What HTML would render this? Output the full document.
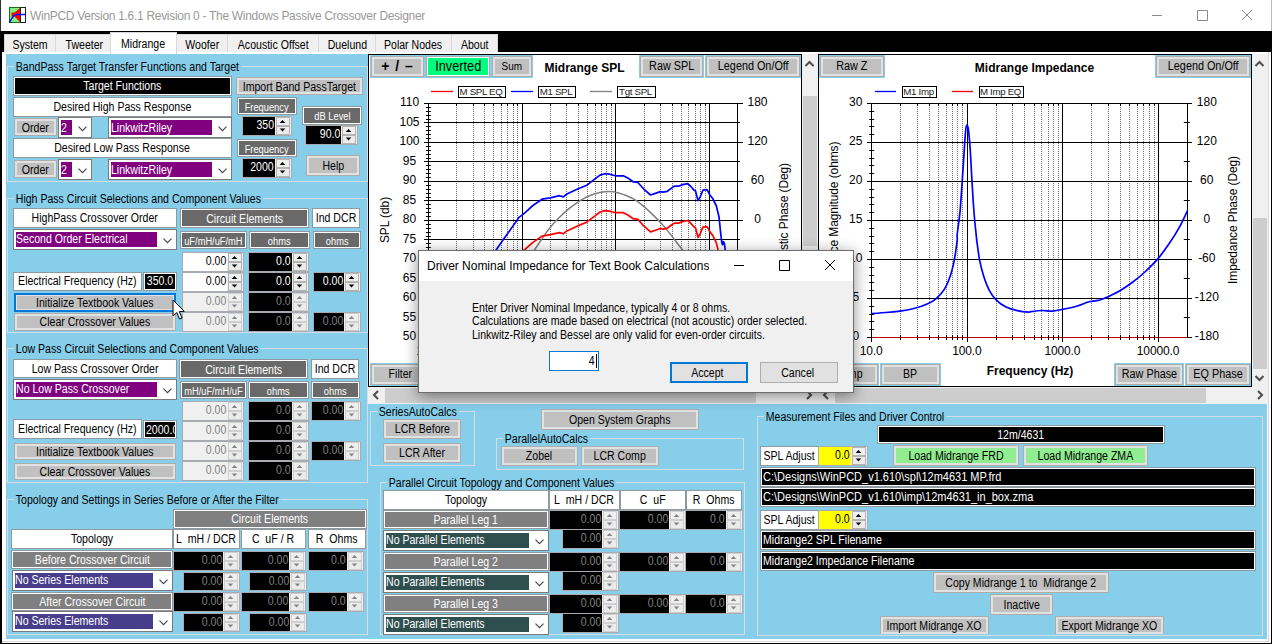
<!DOCTYPE html><html><head><meta charset="utf-8"><title>WinPCD</title><style>
*{box-sizing:border-box;margin:0;padding:0}
html,body{width:1272px;height:644px;overflow:hidden;background:#000}
body{position:relative;font-family:"Liberation Sans",sans-serif;font-size:12px;color:#000}
.t{display:inline-block;transform:scaleX(.88);transform-origin:50% 50%;margin:0 -40px;position:relative}
.tl{transform-origin:0 50%;margin:0}
.tr{transform-origin:100% 50%;margin:0}
.s{font-size:10px;transform:scaleX(.93)}
.a{position:absolute;white-space:nowrap;overflow:hidden}
.lb{position:absolute;white-space:nowrap;overflow:hidden;border:1px solid #8e9aa0;box-shadow:inset 0 0 0 1px #fff;text-align:center}
.bt{position:absolute;white-space:nowrap;overflow:hidden;border:1px solid #adadad;box-shadow:inset 0 0 0 2px #e1e1e1;background:#c0c0c0;text-align:center}
.cb{position:absolute;white-space:nowrap;overflow:hidden;border:1px solid #7a7a7a;background:#fff}
.cb i{position:absolute;left:2px;top:2px;bottom:2px;color:#fff;font-style:normal;padding-left:0;overflow:hidden}
.cb svg{position:absolute;right:4px;top:50%;margin-top:-2px}
.nud{position:absolute;white-space:nowrap;overflow:hidden;border:1px solid #a9abb2;background:#f0f0f0}
.nud b{position:absolute;left:0;top:0;bottom:0;font-weight:normal;text-align:right;padding-right:1px}
.nud svg{position:absolute;right:0;top:0}
.gb{position:absolute;border:1px solid #d3dde3}
.gb span{position:absolute;left:6px;top:-7px;background:#87ceeb;padding:0 2px 0 2px;line-height:14px;white-space:nowrap;transform:scaleX(.88);transform-origin:0 50%}
svg text{font-family:"Liberation Sans",sans-serif}
</style></head><body>
<div class="a" style="left:0;top:0;width:1272px;height:31px;background:#fff;border-left:1px solid #333;border-right:1px solid #bbb"></div>
<svg class="a" style="left:9px;top:7px" width="17" height="17" viewBox="0 0 17 17"><rect x="0.5" y="0.5" width="11" height="15" fill="#7cf27c" stroke="#1c6b1c"/><rect x="11.5" y="0.5" width="5" height="15" fill="#fff" stroke="#222"/><path d="M11 1 L11 15 L5.5 9.5 L2.5 9.5 L2.5 5.5 L5.5 5.5Z" fill="#f00"/><path d="M0.5 15.5 C3 11 4 7.6 8 7.5 L16 7.5" fill="none" stroke="#00f" stroke-width="1.3"/></svg>
<div class="a" style="left:30px;top:7px;height:18px;line-height:18px;font-size:12px;letter-spacing:-0.3px;color:#999">WinPCD Version 1.6.1 Revision 0 - The Windows Passive Crossover Designer</div>
<svg class="a" style="left:1150px;top:8px" width="112" height="16" viewBox="0 0 112 16"><path d="M2 7.5 H12 M47.5 2.5 H57.5 V12.5 H47.5Z M92 2 L102 12 M102 2 L92 12" fill="none" stroke="#8a8a8a" stroke-width="1"/></svg>
<div class="a" style="left:1px;top:31px;width:1270px;height:613px;background:#000"></div>
<div class="a" style="left:2px;top:52px;width:1269px;height:591px;background:#fff"></div>
<div class="a" style="left:2px;top:52px;width:1267px;height:590px;border-right:1px solid #d9d9d9;border-bottom:1px solid #d9d9d9"></div>
<div class="a" style="left:6px;top:54px;width:1261px;height:585px;background:#87ceeb"></div>
<div class="a" style="left:4px;top:34px;width:52px;height:18px;background:#f0f0f0;border:1px solid #d9d9d9;border-bottom:none;text-align:center;line-height:18px"><span class="t" style="top:0.5px;">System</span></div>
<div class="a" style="left:55px;top:34px;width:58px;height:18px;background:#f0f0f0;border:1px solid #d9d9d9;border-bottom:none;text-align:center;line-height:18px"><span class="t" style="top:0.5px;">Tweeter</span></div>
<div class="a" style="left:110px;top:32px;width:67px;height:22px;background:#fff;border:1px solid #d9d9d9;border-bottom:none;text-align:center;line-height:20px"><span class="t" style="top:0.5px;">Midrange</span></div>
<div class="a" style="left:176px;top:34px;width:52px;height:18px;background:#f0f0f0;border:1px solid #d9d9d9;border-bottom:none;text-align:center;line-height:18px"><span class="t" style="top:0.5px;">Woofer</span></div>
<div class="a" style="left:227px;top:34px;width:92px;height:18px;background:#f0f0f0;border:1px solid #d9d9d9;border-bottom:none;text-align:center;line-height:18px"><span class="t" style="top:0.5px;">Acoustic Offset</span></div>
<div class="a" style="left:318px;top:34px;width:58px;height:18px;background:#f0f0f0;border:1px solid #d9d9d9;border-bottom:none;text-align:center;line-height:18px"><span class="t" style="top:0.5px;">Duelund</span></div>
<div class="a" style="left:375px;top:34px;width:77px;height:18px;background:#f0f0f0;border:1px solid #d9d9d9;border-bottom:none;text-align:center;line-height:18px"><span class="t" style="top:0.5px;">Polar Nodes</span></div>
<div class="a" style="left:451px;top:34px;width:47px;height:18px;background:#f0f0f0;border:1px solid #d9d9d9;border-bottom:none;text-align:center;line-height:18px"><span class="t" style="top:0.5px;">About</span></div>
<div class="gb" style="left:7px;top:66px;width:361px;height:116px"><span>BandPass Target Transfer Functions and Target</span></div>
<div class="lb" style="left:13px;top:76px;width:219px;height:20px;line-height:18px;background:#000;color:#fff;"><span class="t">Target Functions</span></div>
<div class="bt" style="left:236px;top:77px;width:127px;height:18px;line-height:16px;background:#c0c0c0;"><span class="t" style="top:0.7px;">Import Band PassTarget</span></div>
<div class="lb" style="left:13px;top:97px;width:219px;height:20px;line-height:18px;background:#fff;color:#000;"><span class="t">Desired High Pass Response</span></div>
<div class="bt" style="left:14px;top:118px;width:43px;height:18px;line-height:16px;background:#c0c0c0;"><span class="t" style="top:0.5px;">Order</span></div>
<div class="cb" style="left:58px;top:117px;width:34px;height:21px;line-height:15px"><i style="background:#800080;width:11px"><span class="t tl" style="top:1px;">2</span></i><svg width="9" height="6" viewBox="0 0 9 6"><path d="M0.5 0.7 L4.5 4.7 L8.5 0.7" fill="none" stroke="#444" stroke-width="1.1"/></svg></div>
<div class="cb" style="left:108px;top:117px;width:124px;height:21px;line-height:15px"><i style="background:#800080;width:101px"><span class="t tl" style="top:1px;">LinkwitzRiley</span></i><svg width="9" height="6" viewBox="0 0 9 6"><path d="M0.5 0.7 L4.5 4.7 L8.5 0.7" fill="none" stroke="#444" stroke-width="1.1"/></svg></div>
<div class="lb" style="left:13px;top:138px;width:219px;height:20px;line-height:18px;background:#fff;color:#000;"><span class="t">Desired Low Pass Response</span></div>
<div class="bt" style="left:14px;top:160px;width:43px;height:18px;line-height:16px;background:#c0c0c0;"><span class="t" style="top:0.5px;">Order</span></div>
<div class="cb" style="left:58px;top:159px;width:34px;height:21px;line-height:15px"><i style="background:#800080;width:11px"><span class="t tl" style="top:1px;">2</span></i><svg width="9" height="6" viewBox="0 0 9 6"><path d="M0.5 0.7 L4.5 4.7 L8.5 0.7" fill="none" stroke="#444" stroke-width="1.1"/></svg></div>
<div class="cb" style="left:108px;top:159px;width:124px;height:21px;line-height:15px"><i style="background:#800080;width:101px"><span class="t tl" style="top:1px;">LinkwitzRiley</span></i><svg width="9" height="6" viewBox="0 0 9 6"><path d="M0.5 0.7 L4.5 4.7 L8.5 0.7" fill="none" stroke="#444" stroke-width="1.1"/></svg></div>
<div class="lb" style="left:237px;top:97px;width:60px;height:18px;line-height:16px;background:#696969;color:#fff;"><span class="t s" style="top:0.8px;">Frequency</span></div>
<div class="nud" style="left:242px;top:116px;width:50px;height:20px;line-height:17px"><b style="background:#000;color:#fff;width:32px"><span class="t tr" style="top:-0.5px;">350</span></b><svg width="16" height="18" viewBox="0 0 16 18"><rect x="0" y="0" width="16" height="18" fill="#f0f0f0"/><rect x="1.5" y="0.5" width="13" height="8" fill="#efefef" stroke="#b4b4b4"/><rect x="1.5" y="9.5" width="13" height="8" fill="#ebebeb" stroke="#b4b4b4"/><path d="M4.7 6 L7.5 3 L10.3 6Z M4.7 11.5 L7.5 14.5 L10.3 11.5Z" fill="#000"/></svg></div>
<div class="lb" style="left:237px;top:139px;width:60px;height:18px;line-height:16px;background:#696969;color:#fff;"><span class="t s" style="top:0.8px;">Frequency</span></div>
<div class="nud" style="left:242px;top:158px;width:50px;height:20px;line-height:17px"><b style="background:#000;color:#fff;width:32px"><span class="t tr" style="top:-0.5px;">2000</span></b><svg width="16" height="18" viewBox="0 0 16 18"><rect x="0" y="0" width="16" height="18" fill="#f0f0f0"/><rect x="1.5" y="0.5" width="13" height="8" fill="#efefef" stroke="#b4b4b4"/><rect x="1.5" y="9.5" width="13" height="8" fill="#ebebeb" stroke="#b4b4b4"/><path d="M4.7 6 L7.5 3 L10.3 6Z M4.7 11.5 L7.5 14.5 L10.3 11.5Z" fill="#000"/></svg></div>
<div class="lb" style="left:302px;top:106px;width:60px;height:19px;line-height:17px;background:#696969;color:#fff;"><span class="t s" style="top:1.3px;">dB Level</span></div>
<div class="nud" style="left:305px;top:125px;width:53px;height:20px;line-height:17px"><b style="background:#000;color:#fff;width:35px"><span class="t tr" style="top:-0.5px;">90.0</span></b><svg width="16" height="18" viewBox="0 0 16 18"><rect x="0" y="0" width="16" height="18" fill="#f0f0f0"/><rect x="1.5" y="0.5" width="13" height="8" fill="#efefef" stroke="#b4b4b4"/><rect x="1.5" y="9.5" width="13" height="8" fill="#ebebeb" stroke="#b4b4b4"/><path d="M4.7 6 L7.5 3 L10.3 6Z M4.7 11.5 L7.5 14.5 L10.3 11.5Z" fill="#000"/></svg></div>
<div class="bt" style="left:306px;top:155px;width:54px;height:21px;line-height:19px;background:#c0c0c0;"><span class="t" style="top:1px;">Help</span></div>
<div class="gb" style="left:7px;top:198px;width:361px;height:135px"><span>High Pass Circuit Selections and Component Values</span></div>
<div class="lb" style="left:13px;top:208px;width:164px;height:20px;line-height:18px;background:#fff;color:#000;"><span class="t">HighPass Crossover Order</span></div>
<div class="lb" style="left:180px;top:208px;width:129px;height:20px;line-height:18px;background:#696969;color:#fff;"><span class="t" style="top:0.5px;">Circuit Elements</span></div>
<div class="lb" style="left:312px;top:208px;width:48px;height:20px;line-height:18px;background:#fff;color:#000;"><span class="t">Ind DCR</span></div>
<div class="lb" style="left:180px;top:231px;width:67px;height:18px;line-height:16px;background:#696969;color:#fff;"><span class="t s" style="top:0.8px;">uF/mH/uF/mH</span></div>
<div class="lb" style="left:249px;top:231px;width:61px;height:18px;line-height:16px;background:#696969;color:#fff;"><span class="t s" style="top:0.8px;">ohms</span></div>
<div class="lb" style="left:313px;top:231px;width:48px;height:18px;line-height:16px;background:#696969;color:#fff;"><span class="t s" style="top:0.8px;">ohms</span></div>
<div class="cb" style="left:13px;top:229px;width:164px;height:21px;line-height:15px"><i style="background:#800080;width:141px"><span class="t tl">Second Order Electrical</span></i><svg width="9" height="6" viewBox="0 0 9 6"><path d="M0.5 0.7 L4.5 4.7 L8.5 0.7" fill="none" stroke="#444" stroke-width="1.1"/></svg></div>
<div class="nud" style="left:182px;top:252px;width:62px;height:20px;line-height:17px"><b style="background:#fff;color:#000;width:44px"><span class="t tr" style="top:-0.5px;">0.00</span></b><svg width="16" height="18" viewBox="0 0 16 18"><rect x="0" y="0" width="16" height="18" fill="#f0f0f0"/><rect x="1.5" y="0.5" width="13" height="8" fill="#efefef" stroke="#b4b4b4"/><rect x="1.5" y="9.5" width="13" height="8" fill="#ebebeb" stroke="#b4b4b4"/><path d="M4.7 6 L7.5 3 L10.3 6Z M4.7 11.5 L7.5 14.5 L10.3 11.5Z" fill="#000"/></svg></div>
<div class="nud" style="left:248px;top:252px;width:61px;height:20px;line-height:17px"><b style="background:#000;color:#fff;width:43px"><span class="t tr" style="top:-0.5px;">0.0</span></b><svg width="16" height="18" viewBox="0 0 16 18"><rect x="0" y="0" width="16" height="18" fill="#f0f0f0"/><rect x="1.5" y="0.5" width="13" height="8" fill="#efefef" stroke="#b4b4b4"/><rect x="1.5" y="9.5" width="13" height="8" fill="#ebebeb" stroke="#b4b4b4"/><path d="M4.7 6 L7.5 3 L10.3 6Z M4.7 11.5 L7.5 14.5 L10.3 11.5Z" fill="#000"/></svg></div>
<div class="nud" style="left:182px;top:272px;width:62px;height:20px;line-height:17px"><b style="background:#fff;color:#000;width:44px"><span class="t tr" style="top:-0.5px;">0.00</span></b><svg width="16" height="18" viewBox="0 0 16 18"><rect x="0" y="0" width="16" height="18" fill="#f0f0f0"/><rect x="1.5" y="0.5" width="13" height="8" fill="#efefef" stroke="#b4b4b4"/><rect x="1.5" y="9.5" width="13" height="8" fill="#ebebeb" stroke="#b4b4b4"/><path d="M4.7 6 L7.5 3 L10.3 6Z M4.7 11.5 L7.5 14.5 L10.3 11.5Z" fill="#000"/></svg></div>
<div class="nud" style="left:248px;top:272px;width:61px;height:20px;line-height:17px"><b style="background:#000;color:#fff;width:43px"><span class="t tr" style="top:-0.5px;">0.0</span></b><svg width="16" height="18" viewBox="0 0 16 18"><rect x="0" y="0" width="16" height="18" fill="#f0f0f0"/><rect x="1.5" y="0.5" width="13" height="8" fill="#efefef" stroke="#b4b4b4"/><rect x="1.5" y="9.5" width="13" height="8" fill="#ebebeb" stroke="#b4b4b4"/><path d="M4.7 6 L7.5 3 L10.3 6Z M4.7 11.5 L7.5 14.5 L10.3 11.5Z" fill="#000"/></svg></div>
<div class="nud" style="left:313px;top:272px;width:48px;height:20px;line-height:17px"><b style="background:#000;color:#fff;width:30px"><span class="t tr" style="top:-0.5px;">0.00</span></b><svg width="16" height="18" viewBox="0 0 16 18"><rect x="0" y="0" width="16" height="18" fill="#f0f0f0"/><rect x="1.5" y="0.5" width="13" height="8" fill="#efefef" stroke="#b4b4b4"/><rect x="1.5" y="9.5" width="13" height="8" fill="#ebebeb" stroke="#b4b4b4"/><path d="M4.7 6 L7.5 3 L10.3 6Z M4.7 11.5 L7.5 14.5 L10.3 11.5Z" fill="#000"/></svg></div>
<div class="nud" style="left:182px;top:292px;width:62px;height:20px;line-height:17px"><b style="background:#f0f0f0;color:#808080;width:44px"><span class="t tr" style="top:-0.5px;">0.00</span></b><svg width="16" height="18" viewBox="0 0 16 18"><rect x="0" y="0" width="16" height="18" fill="#f0f0f0"/><rect x="1.5" y="0.5" width="13" height="8" fill="#efefef" stroke="#cfcfcf"/><rect x="1.5" y="9.5" width="13" height="8" fill="#ebebeb" stroke="#cfcfcf"/><path d="M4.7 6 L7.5 3 L10.3 6Z M4.7 11.5 L7.5 14.5 L10.3 11.5Z" fill="#858585"/></svg></div>
<div class="nud" style="left:248px;top:292px;width:61px;height:20px;line-height:17px"><b style="background:#000;color:#808080;width:43px"><span class="t tr" style="top:-0.5px;">0.0</span></b><svg width="16" height="18" viewBox="0 0 16 18"><rect x="0" y="0" width="16" height="18" fill="#f0f0f0"/><rect x="1.5" y="0.5" width="13" height="8" fill="#efefef" stroke="#cfcfcf"/><rect x="1.5" y="9.5" width="13" height="8" fill="#ebebeb" stroke="#cfcfcf"/><path d="M4.7 6 L7.5 3 L10.3 6Z M4.7 11.5 L7.5 14.5 L10.3 11.5Z" fill="#858585"/></svg></div>
<div class="nud" style="left:182px;top:312px;width:62px;height:20px;line-height:17px"><b style="background:#f0f0f0;color:#808080;width:44px"><span class="t tr" style="top:-0.5px;">0.00</span></b><svg width="16" height="18" viewBox="0 0 16 18"><rect x="0" y="0" width="16" height="18" fill="#f0f0f0"/><rect x="1.5" y="0.5" width="13" height="8" fill="#efefef" stroke="#cfcfcf"/><rect x="1.5" y="9.5" width="13" height="8" fill="#ebebeb" stroke="#cfcfcf"/><path d="M4.7 6 L7.5 3 L10.3 6Z M4.7 11.5 L7.5 14.5 L10.3 11.5Z" fill="#858585"/></svg></div>
<div class="nud" style="left:248px;top:312px;width:61px;height:20px;line-height:17px"><b style="background:#000;color:#808080;width:43px"><span class="t tr" style="top:-0.5px;">0.0</span></b><svg width="16" height="18" viewBox="0 0 16 18"><rect x="0" y="0" width="16" height="18" fill="#f0f0f0"/><rect x="1.5" y="0.5" width="13" height="8" fill="#efefef" stroke="#cfcfcf"/><rect x="1.5" y="9.5" width="13" height="8" fill="#ebebeb" stroke="#cfcfcf"/><path d="M4.7 6 L7.5 3 L10.3 6Z M4.7 11.5 L7.5 14.5 L10.3 11.5Z" fill="#858585"/></svg></div>
<div class="nud" style="left:313px;top:312px;width:48px;height:20px;line-height:17px"><b style="background:#000;color:#808080;width:30px"><span class="t tr" style="top:-0.5px;">0.00</span></b><svg width="16" height="18" viewBox="0 0 16 18"><rect x="0" y="0" width="16" height="18" fill="#f0f0f0"/><rect x="1.5" y="0.5" width="13" height="8" fill="#efefef" stroke="#cfcfcf"/><rect x="1.5" y="9.5" width="13" height="8" fill="#ebebeb" stroke="#cfcfcf"/><path d="M4.7 6 L7.5 3 L10.3 6Z M4.7 11.5 L7.5 14.5 L10.3 11.5Z" fill="#858585"/></svg></div>
<div class="lb" style="left:13px;top:272px;width:129px;height:19px;line-height:17px;background:#fff;color:#000;"><span class="t" style="top:-0.3px;">Electrical Frequency (Hz)</span></div>
<div class="lb" style="left:143px;top:272px;width:34px;height:19px;line-height:17px;background:#000;color:#fff;"><span class="t" style="top:-0.3px;">350.0</span></div>
<div class="bt" style="left:14px;top:293px;width:162px;height:19px;line-height:17px;background:#c0c0c0;border:2px solid #0078d7;box-shadow:inset 0 0 0 1px #e1e1e1;line-height:15px"><span class="t" style="top:1px;">Initialize Textbook Values</span></div>
<div class="bt" style="left:14px;top:313px;width:162px;height:18px;line-height:16px;background:#c0c0c0;"><span class="t" style="top:0.3px;">Clear Crossover Values</span></div>
<div class="gb" style="left:7px;top:348px;width:361px;height:135px"><span>Low Pass Circuit Selections and Component Values</span></div>
<div class="lb" style="left:13px;top:359px;width:164px;height:19px;line-height:17px;background:#fff;color:#000;"><span class="t" style="top:0.5px;">Low Pass Crossover Order</span></div>
<div class="lb" style="left:179px;top:359px;width:129px;height:20px;line-height:18px;background:#696969;color:#fff;"><span class="t" style="top:0.5px;">Circuit Elements</span></div>
<div class="lb" style="left:311px;top:359px;width:48px;height:20px;line-height:18px;background:#fff;color:#000;"><span class="t">Ind DCR</span></div>
<div class="lb" style="left:180px;top:381px;width:67px;height:18px;line-height:16px;background:#696969;color:#fff;"><span class="t s" style="top:0.8px;">mH/uF/mH/uF</span></div>
<div class="lb" style="left:248px;top:381px;width:61px;height:18px;line-height:16px;background:#696969;color:#fff;"><span class="t s" style="top:0.8px;">ohms</span></div>
<div class="lb" style="left:311px;top:381px;width:49px;height:18px;line-height:16px;background:#696969;color:#fff;"><span class="t s" style="top:0.8px;">ohms</span></div>
<div class="cb" style="left:13px;top:379px;width:164px;height:21px;line-height:15px"><i style="background:#800080;width:141px"><span class="t tl">No Low Pass Crossover</span></i><svg width="9" height="6" viewBox="0 0 9 6"><path d="M0.5 0.7 L4.5 4.7 L8.5 0.7" fill="none" stroke="#444" stroke-width="1.1"/></svg></div>
<div class="nud" style="left:182px;top:401px;width:62px;height:20px;line-height:17px"><b style="background:#f0f0f0;color:#808080;width:44px"><span class="t tr" style="top:-0.5px;">0.00</span></b><svg width="16" height="18" viewBox="0 0 16 18"><rect x="0" y="0" width="16" height="18" fill="#f0f0f0"/><rect x="1.5" y="0.5" width="13" height="8" fill="#efefef" stroke="#cfcfcf"/><rect x="1.5" y="9.5" width="13" height="8" fill="#ebebeb" stroke="#cfcfcf"/><path d="M4.7 6 L7.5 3 L10.3 6Z M4.7 11.5 L7.5 14.5 L10.3 11.5Z" fill="#858585"/></svg></div>
<div class="nud" style="left:248px;top:401px;width:61px;height:20px;line-height:17px"><b style="background:#000;color:#808080;width:43px"><span class="t tr" style="top:-0.5px;">0.0</span></b><svg width="16" height="18" viewBox="0 0 16 18"><rect x="0" y="0" width="16" height="18" fill="#f0f0f0"/><rect x="1.5" y="0.5" width="13" height="8" fill="#efefef" stroke="#cfcfcf"/><rect x="1.5" y="9.5" width="13" height="8" fill="#ebebeb" stroke="#cfcfcf"/><path d="M4.7 6 L7.5 3 L10.3 6Z M4.7 11.5 L7.5 14.5 L10.3 11.5Z" fill="#858585"/></svg></div>
<div class="nud" style="left:311px;top:401px;width:50px;height:20px;line-height:17px"><b style="background:#000;color:#808080;width:32px"><span class="t tr" style="top:-0.5px;">0.00</span></b><svg width="16" height="18" viewBox="0 0 16 18"><rect x="0" y="0" width="16" height="18" fill="#f0f0f0"/><rect x="1.5" y="0.5" width="13" height="8" fill="#efefef" stroke="#cfcfcf"/><rect x="1.5" y="9.5" width="13" height="8" fill="#ebebeb" stroke="#cfcfcf"/><path d="M4.7 6 L7.5 3 L10.3 6Z M4.7 11.5 L7.5 14.5 L10.3 11.5Z" fill="#858585"/></svg></div>
<div class="nud" style="left:182px;top:421px;width:62px;height:20px;line-height:17px"><b style="background:#f0f0f0;color:#808080;width:44px"><span class="t tr" style="top:-0.5px;">0.00</span></b><svg width="16" height="18" viewBox="0 0 16 18"><rect x="0" y="0" width="16" height="18" fill="#f0f0f0"/><rect x="1.5" y="0.5" width="13" height="8" fill="#efefef" stroke="#cfcfcf"/><rect x="1.5" y="9.5" width="13" height="8" fill="#ebebeb" stroke="#cfcfcf"/><path d="M4.7 6 L7.5 3 L10.3 6Z M4.7 11.5 L7.5 14.5 L10.3 11.5Z" fill="#858585"/></svg></div>
<div class="nud" style="left:248px;top:421px;width:61px;height:20px;line-height:17px"><b style="background:#000;color:#808080;width:43px"><span class="t tr" style="top:-0.5px;">0.0</span></b><svg width="16" height="18" viewBox="0 0 16 18"><rect x="0" y="0" width="16" height="18" fill="#f0f0f0"/><rect x="1.5" y="0.5" width="13" height="8" fill="#efefef" stroke="#cfcfcf"/><rect x="1.5" y="9.5" width="13" height="8" fill="#ebebeb" stroke="#cfcfcf"/><path d="M4.7 6 L7.5 3 L10.3 6Z M4.7 11.5 L7.5 14.5 L10.3 11.5Z" fill="#858585"/></svg></div>
<div class="nud" style="left:182px;top:441px;width:62px;height:20px;line-height:17px"><b style="background:#f0f0f0;color:#808080;width:44px"><span class="t tr" style="top:-0.5px;">0.00</span></b><svg width="16" height="18" viewBox="0 0 16 18"><rect x="0" y="0" width="16" height="18" fill="#f0f0f0"/><rect x="1.5" y="0.5" width="13" height="8" fill="#efefef" stroke="#cfcfcf"/><rect x="1.5" y="9.5" width="13" height="8" fill="#ebebeb" stroke="#cfcfcf"/><path d="M4.7 6 L7.5 3 L10.3 6Z M4.7 11.5 L7.5 14.5 L10.3 11.5Z" fill="#858585"/></svg></div>
<div class="nud" style="left:248px;top:441px;width:61px;height:20px;line-height:17px"><b style="background:#000;color:#808080;width:43px"><span class="t tr" style="top:-0.5px;">0.0</span></b><svg width="16" height="18" viewBox="0 0 16 18"><rect x="0" y="0" width="16" height="18" fill="#f0f0f0"/><rect x="1.5" y="0.5" width="13" height="8" fill="#efefef" stroke="#cfcfcf"/><rect x="1.5" y="9.5" width="13" height="8" fill="#ebebeb" stroke="#cfcfcf"/><path d="M4.7 6 L7.5 3 L10.3 6Z M4.7 11.5 L7.5 14.5 L10.3 11.5Z" fill="#858585"/></svg></div>
<div class="nud" style="left:311px;top:441px;width:50px;height:20px;line-height:17px"><b style="background:#000;color:#808080;width:32px"><span class="t tr" style="top:-0.5px;">0.00</span></b><svg width="16" height="18" viewBox="0 0 16 18"><rect x="0" y="0" width="16" height="18" fill="#f0f0f0"/><rect x="1.5" y="0.5" width="13" height="8" fill="#efefef" stroke="#cfcfcf"/><rect x="1.5" y="9.5" width="13" height="8" fill="#ebebeb" stroke="#cfcfcf"/><path d="M4.7 6 L7.5 3 L10.3 6Z M4.7 11.5 L7.5 14.5 L10.3 11.5Z" fill="#858585"/></svg></div>
<div class="nud" style="left:182px;top:461px;width:62px;height:20px;line-height:17px"><b style="background:#f0f0f0;color:#808080;width:44px"><span class="t tr" style="top:-0.5px;">0.00</span></b><svg width="16" height="18" viewBox="0 0 16 18"><rect x="0" y="0" width="16" height="18" fill="#f0f0f0"/><rect x="1.5" y="0.5" width="13" height="8" fill="#efefef" stroke="#cfcfcf"/><rect x="1.5" y="9.5" width="13" height="8" fill="#ebebeb" stroke="#cfcfcf"/><path d="M4.7 6 L7.5 3 L10.3 6Z M4.7 11.5 L7.5 14.5 L10.3 11.5Z" fill="#858585"/></svg></div>
<div class="nud" style="left:248px;top:461px;width:61px;height:20px;line-height:17px"><b style="background:#000;color:#808080;width:43px"><span class="t tr" style="top:-0.5px;">0.0</span></b><svg width="16" height="18" viewBox="0 0 16 18"><rect x="0" y="0" width="16" height="18" fill="#f0f0f0"/><rect x="1.5" y="0.5" width="13" height="8" fill="#efefef" stroke="#cfcfcf"/><rect x="1.5" y="9.5" width="13" height="8" fill="#ebebeb" stroke="#cfcfcf"/><path d="M4.7 6 L7.5 3 L10.3 6Z M4.7 11.5 L7.5 14.5 L10.3 11.5Z" fill="#858585"/></svg></div>
<div class="lb" style="left:13px;top:419px;width:129px;height:20px;line-height:18px;background:#fff;color:#000;"><span class="t">Electrical Frequency (Hz)</span></div>
<div class="lb" style="left:143px;top:420px;width:34px;height:19px;line-height:17px;background:#000;color:#fff;text-align:left;padding-left:2px"><span class="t tl" style="top:0.5px;">2000.0</span></div>
<div class="bt" style="left:14px;top:443px;width:162px;height:17px;line-height:15px;background:#c0c0c0;"><span class="t" style="top:1px;">Initialize Textbook Values</span></div>
<div class="bt" style="left:14px;top:463px;width:162px;height:17px;line-height:15px;background:#c0c0c0;"><span class="t" style="top:1px;">Clear Crossover Values</span></div>
<div class="gb" style="left:7px;top:499px;width:361px;height:136px"><span>Topology and Settings in Series Before or After the Filter</span></div>
<div class="lb" style="left:173px;top:509px;width:194px;height:20px;line-height:18px;background:#808080;color:#fff;"><span class="t">Circuit Elements</span></div>
<div class="lb" style="left:11px;top:529px;width:162px;height:20px;line-height:18px;background:#fff;color:#000;"><span class="t">Topology</span></div>
<div class="lb" style="left:173px;top:529px;width:67px;height:20px;line-height:18px;background:#fff;color:#000;"><span class="t">L&nbsp; mH / DCR</span></div>
<div class="lb" style="left:241px;top:529px;width:65px;height:20px;line-height:18px;background:#fff;color:#000;"><span class="t">C&nbsp; uF / R</span></div>
<div class="lb" style="left:308px;top:529px;width:58px;height:20px;line-height:18px;background:#fff;color:#000;"><span class="t">R&nbsp; Ohms</span></div>
<div class="lb" style="left:11px;top:550px;width:162px;height:19px;line-height:17px;background:#808080;color:#fff;"><span class="t" style="top:0.5px;">Before Crossover Circuit</span></div>
<div class="cb" style="left:12px;top:570px;width:161px;height:21px;line-height:15px"><i style="background:#483d8b;width:138px"><span class="t tl">No Series Elements</span></i><svg width="9" height="6" viewBox="0 0 9 6"><path d="M0.5 0.7 L4.5 4.7 L8.5 0.7" fill="none" stroke="#444" stroke-width="1.1"/></svg></div>
<div class="lb" style="left:11px;top:592px;width:162px;height:19px;line-height:17px;background:#808080;color:#fff;"><span class="t" style="top:0.5px;">After Crossover Circuit</span></div>
<div class="cb" style="left:12px;top:611px;width:161px;height:21px;line-height:15px"><i style="background:#483d8b;width:138px"><span class="t tl">No Series Elements</span></i><svg width="9" height="6" viewBox="0 0 9 6"><path d="M0.5 0.7 L4.5 4.7 L8.5 0.7" fill="none" stroke="#444" stroke-width="1.1"/></svg></div>
<div class="nud" style="left:173px;top:551px;width:67px;height:20px;line-height:17px"><b style="background:#000;color:#808080;width:49px"><span class="t tr" style="top:-0.5px;">0.00</span></b><svg width="16" height="18" viewBox="0 0 16 18"><rect x="0" y="0" width="16" height="18" fill="#f0f0f0"/><rect x="1.5" y="0.5" width="13" height="8" fill="#efefef" stroke="#cfcfcf"/><rect x="1.5" y="9.5" width="13" height="8" fill="#ebebeb" stroke="#cfcfcf"/><path d="M4.7 6 L7.5 3 L10.3 6Z M4.7 11.5 L7.5 14.5 L10.3 11.5Z" fill="#858585"/></svg></div>
<div class="nud" style="left:241px;top:551px;width:65px;height:20px;line-height:17px"><b style="background:#000;color:#808080;width:47px"><span class="t tr" style="top:-0.5px;">0.00</span></b><svg width="16" height="18" viewBox="0 0 16 18"><rect x="0" y="0" width="16" height="18" fill="#f0f0f0"/><rect x="1.5" y="0.5" width="13" height="8" fill="#efefef" stroke="#cfcfcf"/><rect x="1.5" y="9.5" width="13" height="8" fill="#ebebeb" stroke="#cfcfcf"/><path d="M4.7 6 L7.5 3 L10.3 6Z M4.7 11.5 L7.5 14.5 L10.3 11.5Z" fill="#858585"/></svg></div>
<div class="nud" style="left:308px;top:551px;width:56px;height:20px;line-height:17px"><b style="background:#000;color:#808080;width:38px"><span class="t tr" style="top:-0.5px;">0.0</span></b><svg width="16" height="18" viewBox="0 0 16 18"><rect x="0" y="0" width="16" height="18" fill="#f0f0f0"/><rect x="1.5" y="0.5" width="13" height="8" fill="#efefef" stroke="#cfcfcf"/><rect x="1.5" y="9.5" width="13" height="8" fill="#ebebeb" stroke="#cfcfcf"/><path d="M4.7 6 L7.5 3 L10.3 6Z M4.7 11.5 L7.5 14.5 L10.3 11.5Z" fill="#858585"/></svg></div>
<div class="nud" style="left:173px;top:592px;width:67px;height:20px;line-height:17px"><b style="background:#000;color:#808080;width:49px"><span class="t tr" style="top:-0.5px;">0.00</span></b><svg width="16" height="18" viewBox="0 0 16 18"><rect x="0" y="0" width="16" height="18" fill="#f0f0f0"/><rect x="1.5" y="0.5" width="13" height="8" fill="#efefef" stroke="#cfcfcf"/><rect x="1.5" y="9.5" width="13" height="8" fill="#ebebeb" stroke="#cfcfcf"/><path d="M4.7 6 L7.5 3 L10.3 6Z M4.7 11.5 L7.5 14.5 L10.3 11.5Z" fill="#858585"/></svg></div>
<div class="nud" style="left:241px;top:592px;width:65px;height:20px;line-height:17px"><b style="background:#000;color:#808080;width:47px"><span class="t tr" style="top:-0.5px;">0.00</span></b><svg width="16" height="18" viewBox="0 0 16 18"><rect x="0" y="0" width="16" height="18" fill="#f0f0f0"/><rect x="1.5" y="0.5" width="13" height="8" fill="#efefef" stroke="#cfcfcf"/><rect x="1.5" y="9.5" width="13" height="8" fill="#ebebeb" stroke="#cfcfcf"/><path d="M4.7 6 L7.5 3 L10.3 6Z M4.7 11.5 L7.5 14.5 L10.3 11.5Z" fill="#858585"/></svg></div>
<div class="nud" style="left:308px;top:592px;width:56px;height:20px;line-height:17px"><b style="background:#000;color:#808080;width:38px"><span class="t tr" style="top:-0.5px;">0.0</span></b><svg width="16" height="18" viewBox="0 0 16 18"><rect x="0" y="0" width="16" height="18" fill="#f0f0f0"/><rect x="1.5" y="0.5" width="13" height="8" fill="#efefef" stroke="#cfcfcf"/><rect x="1.5" y="9.5" width="13" height="8" fill="#ebebeb" stroke="#cfcfcf"/><path d="M4.7 6 L7.5 3 L10.3 6Z M4.7 11.5 L7.5 14.5 L10.3 11.5Z" fill="#858585"/></svg></div>
<div class="nud" style="left:183px;top:572px;width:57px;height:19px;line-height:16px"><b style="background:#000;color:#808080;width:39px"><span class="t tr" style="top:-0.5px;">0.00</span></b><svg width="16" height="17" viewBox="0 0 16 17"><rect x="0" y="0" width="16" height="17" fill="#f0f0f0"/><rect x="1.5" y="0.5" width="13" height="7" fill="#efefef" stroke="#cfcfcf"/><rect x="1.5" y="8.5" width="13" height="8" fill="#ebebeb" stroke="#cfcfcf"/><path d="M4.7 5 L7.5 2 L10.3 5Z M4.7 10.5 L7.5 13.5 L10.3 10.5Z" fill="#858585"/></svg></div>
<div class="nud" style="left:249px;top:572px;width:58px;height:19px;line-height:16px"><b style="background:#000;color:#808080;width:40px"><span class="t tr" style="top:-0.5px;">0.00</span></b><svg width="16" height="17" viewBox="0 0 16 17"><rect x="0" y="0" width="16" height="17" fill="#f0f0f0"/><rect x="1.5" y="0.5" width="13" height="7" fill="#efefef" stroke="#cfcfcf"/><rect x="1.5" y="8.5" width="13" height="8" fill="#ebebeb" stroke="#cfcfcf"/><path d="M4.7 5 L7.5 2 L10.3 5Z M4.7 10.5 L7.5 13.5 L10.3 10.5Z" fill="#858585"/></svg></div>
<div class="nud" style="left:183px;top:613px;width:57px;height:19px;line-height:16px"><b style="background:#000;color:#808080;width:39px"><span class="t tr" style="top:-0.5px;">0.00</span></b><svg width="16" height="17" viewBox="0 0 16 17"><rect x="0" y="0" width="16" height="17" fill="#f0f0f0"/><rect x="1.5" y="0.5" width="13" height="7" fill="#efefef" stroke="#cfcfcf"/><rect x="1.5" y="8.5" width="13" height="8" fill="#ebebeb" stroke="#cfcfcf"/><path d="M4.7 5 L7.5 2 L10.3 5Z M4.7 10.5 L7.5 13.5 L10.3 10.5Z" fill="#858585"/></svg></div>
<div class="nud" style="left:249px;top:613px;width:58px;height:19px;line-height:16px"><b style="background:#000;color:#808080;width:40px"><span class="t tr" style="top:-0.5px;">0.00</span></b><svg width="16" height="17" viewBox="0 0 16 17"><rect x="0" y="0" width="16" height="17" fill="#f0f0f0"/><rect x="1.5" y="0.5" width="13" height="7" fill="#efefef" stroke="#cfcfcf"/><rect x="1.5" y="8.5" width="13" height="8" fill="#ebebeb" stroke="#cfcfcf"/><path d="M4.7 5 L7.5 2 L10.3 5Z M4.7 10.5 L7.5 13.5 L10.3 10.5Z" fill="#858585"/></svg></div>
<div class="gb" style="left:370px;top:411px;width:105px;height:55px"><span>SeriesAutoCalcs</span></div>
<div class="bt" style="left:383px;top:419px;width:78px;height:20px;line-height:18px;background:#c0c0c0;"><span class="t" style="top:0.3px;">LCR Before</span></div>
<div class="bt" style="left:383px;top:443px;width:78px;height:20px;line-height:18px;background:#c0c0c0;"><span class="t" style="top:0.3px;">LCR After</span></div>
<div class="bt" style="left:541px;top:409px;width:158px;height:21px;line-height:19px;background:#c0c0c0;"><span class="t" style="top:1px;">Open System Graphs</span></div>
<div class="gb" style="left:496px;top:438px;width:248px;height:32px"><span>ParallelAutoCalcs</span></div>
<div class="bt" style="left:501px;top:446px;width:77px;height:20px;line-height:18px;background:#c0c0c0;"><span class="t" style="top:0.3px;">Zobel</span></div>
<div class="bt" style="left:581px;top:446px;width:78px;height:20px;line-height:18px;background:#c0c0c0;"><span class="t" style="top:0.3px;">LCR Comp</span></div>
<div class="gb" style="left:380px;top:482px;width:365px;height:153px"><span>Parallel Circuit Topology and Component Values</span></div>
<div class="lb" style="left:383px;top:490px;width:166px;height:20px;line-height:18px;background:#fff;color:#000;"><span class="t">Topology</span></div>
<div class="lb" style="left:549px;top:490px;width:71px;height:20px;line-height:18px;background:#fff;color:#000;"><span class="t">L&nbsp; mH / DCR</span></div>
<div class="lb" style="left:620px;top:490px;width:66px;height:20px;line-height:18px;background:#fff;color:#000;"><span class="t">C&nbsp; uF</span></div>
<div class="lb" style="left:686px;top:490px;width:56px;height:20px;line-height:18px;background:#fff;color:#000;"><span class="t">R&nbsp; Ohms</span></div>
<div class="lb" style="left:383px;top:510px;width:166px;height:19px;line-height:17px;background:#808080;color:#fff;"><span class="t" style="top:0.5px;">Parallel Leg 1</span></div>
<div class="nud" style="left:549px;top:510px;width:70px;height:20px;line-height:17px"><b style="background:#000;color:#808080;width:52px"><span class="t tr" style="top:-0.5px;">0.00</span></b><svg width="16" height="18" viewBox="0 0 16 18"><rect x="0" y="0" width="16" height="18" fill="#f0f0f0"/><rect x="1.5" y="0.5" width="13" height="8" fill="#efefef" stroke="#cfcfcf"/><rect x="1.5" y="9.5" width="13" height="8" fill="#ebebeb" stroke="#cfcfcf"/><path d="M4.7 6 L7.5 3 L10.3 6Z M4.7 11.5 L7.5 14.5 L10.3 11.5Z" fill="#858585"/></svg></div>
<div class="nud" style="left:619px;top:510px;width:67px;height:20px;line-height:17px"><b style="background:#000;color:#808080;width:49px"><span class="t tr" style="top:-0.5px;">0.00</span></b><svg width="16" height="18" viewBox="0 0 16 18"><rect x="0" y="0" width="16" height="18" fill="#f0f0f0"/><rect x="1.5" y="0.5" width="13" height="8" fill="#efefef" stroke="#cfcfcf"/><rect x="1.5" y="9.5" width="13" height="8" fill="#ebebeb" stroke="#cfcfcf"/><path d="M4.7 6 L7.5 3 L10.3 6Z M4.7 11.5 L7.5 14.5 L10.3 11.5Z" fill="#858585"/></svg></div>
<div class="nud" style="left:685px;top:510px;width:58px;height:20px;line-height:17px"><b style="background:#000;color:#808080;width:40px"><span class="t tr" style="top:-0.5px;">0.0</span></b><svg width="16" height="18" viewBox="0 0 16 18"><rect x="0" y="0" width="16" height="18" fill="#f0f0f0"/><rect x="1.5" y="0.5" width="13" height="8" fill="#efefef" stroke="#cfcfcf"/><rect x="1.5" y="9.5" width="13" height="8" fill="#ebebeb" stroke="#cfcfcf"/><path d="M4.7 6 L7.5 3 L10.3 6Z M4.7 11.5 L7.5 14.5 L10.3 11.5Z" fill="#858585"/></svg></div>
<div class="cb" style="left:383px;top:530px;width:166px;height:21px;line-height:15px"><i style="background:#2f4f4f;width:143px"><span class="t tl">No Parallel Elements</span></i><svg width="9" height="6" viewBox="0 0 9 6"><path d="M0.5 0.7 L4.5 4.7 L8.5 0.7" fill="none" stroke="#444" stroke-width="1.1"/></svg></div>
<div class="nud" style="left:562px;top:529px;width:57px;height:20px;line-height:17px"><b style="background:#000;color:#808080;width:39px"><span class="t tr" style="top:-0.5px;">0.00</span></b><svg width="16" height="18" viewBox="0 0 16 18"><rect x="0" y="0" width="16" height="18" fill="#f0f0f0"/><rect x="1.5" y="0.5" width="13" height="8" fill="#efefef" stroke="#cfcfcf"/><rect x="1.5" y="9.5" width="13" height="8" fill="#ebebeb" stroke="#cfcfcf"/><path d="M4.7 6 L7.5 3 L10.3 6Z M4.7 11.5 L7.5 14.5 L10.3 11.5Z" fill="#858585"/></svg></div>
<div class="lb" style="left:383px;top:552px;width:166px;height:19px;line-height:17px;background:#808080;color:#fff;"><span class="t" style="top:0.5px;">Parallel Leg 2</span></div>
<div class="nud" style="left:549px;top:552px;width:70px;height:20px;line-height:17px"><b style="background:#000;color:#808080;width:52px"><span class="t tr" style="top:-0.5px;">0.00</span></b><svg width="16" height="18" viewBox="0 0 16 18"><rect x="0" y="0" width="16" height="18" fill="#f0f0f0"/><rect x="1.5" y="0.5" width="13" height="8" fill="#efefef" stroke="#cfcfcf"/><rect x="1.5" y="9.5" width="13" height="8" fill="#ebebeb" stroke="#cfcfcf"/><path d="M4.7 6 L7.5 3 L10.3 6Z M4.7 11.5 L7.5 14.5 L10.3 11.5Z" fill="#858585"/></svg></div>
<div class="nud" style="left:619px;top:552px;width:67px;height:20px;line-height:17px"><b style="background:#000;color:#808080;width:49px"><span class="t tr" style="top:-0.5px;">0.00</span></b><svg width="16" height="18" viewBox="0 0 16 18"><rect x="0" y="0" width="16" height="18" fill="#f0f0f0"/><rect x="1.5" y="0.5" width="13" height="8" fill="#efefef" stroke="#cfcfcf"/><rect x="1.5" y="9.5" width="13" height="8" fill="#ebebeb" stroke="#cfcfcf"/><path d="M4.7 6 L7.5 3 L10.3 6Z M4.7 11.5 L7.5 14.5 L10.3 11.5Z" fill="#858585"/></svg></div>
<div class="nud" style="left:685px;top:552px;width:58px;height:20px;line-height:17px"><b style="background:#000;color:#808080;width:40px"><span class="t tr" style="top:-0.5px;">0.0</span></b><svg width="16" height="18" viewBox="0 0 16 18"><rect x="0" y="0" width="16" height="18" fill="#f0f0f0"/><rect x="1.5" y="0.5" width="13" height="8" fill="#efefef" stroke="#cfcfcf"/><rect x="1.5" y="9.5" width="13" height="8" fill="#ebebeb" stroke="#cfcfcf"/><path d="M4.7 6 L7.5 3 L10.3 6Z M4.7 11.5 L7.5 14.5 L10.3 11.5Z" fill="#858585"/></svg></div>
<div class="cb" style="left:383px;top:572px;width:166px;height:21px;line-height:15px"><i style="background:#2f4f4f;width:143px"><span class="t tl">No Parallel Elements</span></i><svg width="9" height="6" viewBox="0 0 9 6"><path d="M0.5 0.7 L4.5 4.7 L8.5 0.7" fill="none" stroke="#444" stroke-width="1.1"/></svg></div>
<div class="nud" style="left:562px;top:571px;width:57px;height:20px;line-height:17px"><b style="background:#000;color:#808080;width:39px"><span class="t tr" style="top:-0.5px;">0.00</span></b><svg width="16" height="18" viewBox="0 0 16 18"><rect x="0" y="0" width="16" height="18" fill="#f0f0f0"/><rect x="1.5" y="0.5" width="13" height="8" fill="#efefef" stroke="#cfcfcf"/><rect x="1.5" y="9.5" width="13" height="8" fill="#ebebeb" stroke="#cfcfcf"/><path d="M4.7 6 L7.5 3 L10.3 6Z M4.7 11.5 L7.5 14.5 L10.3 11.5Z" fill="#858585"/></svg></div>
<div class="lb" style="left:383px;top:594px;width:166px;height:19px;line-height:17px;background:#808080;color:#fff;"><span class="t" style="top:0.5px;">Parallel Leg 3</span></div>
<div class="nud" style="left:549px;top:594px;width:70px;height:20px;line-height:17px"><b style="background:#000;color:#808080;width:52px"><span class="t tr" style="top:-0.5px;">0.00</span></b><svg width="16" height="18" viewBox="0 0 16 18"><rect x="0" y="0" width="16" height="18" fill="#f0f0f0"/><rect x="1.5" y="0.5" width="13" height="8" fill="#efefef" stroke="#cfcfcf"/><rect x="1.5" y="9.5" width="13" height="8" fill="#ebebeb" stroke="#cfcfcf"/><path d="M4.7 6 L7.5 3 L10.3 6Z M4.7 11.5 L7.5 14.5 L10.3 11.5Z" fill="#858585"/></svg></div>
<div class="nud" style="left:619px;top:594px;width:67px;height:20px;line-height:17px"><b style="background:#000;color:#808080;width:49px"><span class="t tr" style="top:-0.5px;">0.00</span></b><svg width="16" height="18" viewBox="0 0 16 18"><rect x="0" y="0" width="16" height="18" fill="#f0f0f0"/><rect x="1.5" y="0.5" width="13" height="8" fill="#efefef" stroke="#cfcfcf"/><rect x="1.5" y="9.5" width="13" height="8" fill="#ebebeb" stroke="#cfcfcf"/><path d="M4.7 6 L7.5 3 L10.3 6Z M4.7 11.5 L7.5 14.5 L10.3 11.5Z" fill="#858585"/></svg></div>
<div class="nud" style="left:685px;top:594px;width:58px;height:20px;line-height:17px"><b style="background:#000;color:#808080;width:40px"><span class="t tr" style="top:-0.5px;">0.0</span></b><svg width="16" height="18" viewBox="0 0 16 18"><rect x="0" y="0" width="16" height="18" fill="#f0f0f0"/><rect x="1.5" y="0.5" width="13" height="8" fill="#efefef" stroke="#cfcfcf"/><rect x="1.5" y="9.5" width="13" height="8" fill="#ebebeb" stroke="#cfcfcf"/><path d="M4.7 6 L7.5 3 L10.3 6Z M4.7 11.5 L7.5 14.5 L10.3 11.5Z" fill="#858585"/></svg></div>
<div class="cb" style="left:383px;top:614px;width:166px;height:21px;line-height:15px"><i style="background:#2f4f4f;width:143px"><span class="t tl">No Parallel Elements</span></i><svg width="9" height="6" viewBox="0 0 9 6"><path d="M0.5 0.7 L4.5 4.7 L8.5 0.7" fill="none" stroke="#444" stroke-width="1.1"/></svg></div>
<div class="nud" style="left:562px;top:613px;width:57px;height:20px;line-height:17px"><b style="background:#000;color:#808080;width:39px"><span class="t tr" style="top:-0.5px;">0.00</span></b><svg width="16" height="18" viewBox="0 0 16 18"><rect x="0" y="0" width="16" height="18" fill="#f0f0f0"/><rect x="1.5" y="0.5" width="13" height="8" fill="#efefef" stroke="#cfcfcf"/><rect x="1.5" y="9.5" width="13" height="8" fill="#ebebeb" stroke="#cfcfcf"/><path d="M4.7 6 L7.5 3 L10.3 6Z M4.7 11.5 L7.5 14.5 L10.3 11.5Z" fill="#858585"/></svg></div>
<div class="gb" style="left:757px;top:416px;width:506px;height:220px"><span>Measurement Files and Driver Control</span></div>
<div class="lb" style="left:877px;top:425px;width:288px;height:19px;line-height:17px;background:#000;color:#fff;"><span class="t" style="top:0.5px;">12m/4631</span></div>
<div class="lb" style="left:760px;top:446px;width:59px;height:20px;line-height:18px;background:#fff;color:#000;"><span class="t">SPL Adjust</span></div>
<div class="nud" style="left:818px;top:446px;width:50px;height:20px;line-height:17px"><b style="background:#ff0;color:#000;width:32px"><span class="t tr" style="top:-0.5px;">0.0</span></b><svg width="16" height="18" viewBox="0 0 16 18"><rect x="0" y="0" width="16" height="18" fill="#f0f0f0"/><rect x="1.5" y="0.5" width="13" height="8" fill="#efefef" stroke="#b4b4b4"/><rect x="1.5" y="9.5" width="13" height="8" fill="#ebebeb" stroke="#b4b4b4"/><path d="M4.7 6 L7.5 3 L10.3 6Z M4.7 11.5 L7.5 14.5 L10.3 11.5Z" fill="#000"/></svg></div>
<div class="lb" style="left:760px;top:510px;width:59px;height:20px;line-height:18px;background:#fff;color:#000;"><span class="t">SPL Adjust</span></div>
<div class="nud" style="left:818px;top:510px;width:50px;height:20px;line-height:17px"><b style="background:#ff0;color:#000;width:32px"><span class="t tr" style="top:-0.5px;">0.0</span></b><svg width="16" height="18" viewBox="0 0 16 18"><rect x="0" y="0" width="16" height="18" fill="#f0f0f0"/><rect x="1.5" y="0.5" width="13" height="8" fill="#efefef" stroke="#b4b4b4"/><rect x="1.5" y="9.5" width="13" height="8" fill="#ebebeb" stroke="#b4b4b4"/><path d="M4.7 6 L7.5 3 L10.3 6Z M4.7 11.5 L7.5 14.5 L10.3 11.5Z" fill="#000"/></svg></div>
<div class="bt" style="left:893px;top:445px;width:126px;height:21px;line-height:19px;background:#90ee90;"><span class="t" style="top:1px;">Load Midrange FRD</span></div>
<div class="bt" style="left:1023px;top:445px;width:125px;height:21px;line-height:19px;background:#90ee90;"><span class="t" style="top:1px;">Load Midrange ZMA</span></div>
<div class="lb" style="left:760px;top:467px;width:496px;height:20px;line-height:18px;background:#000;color:#fff;text-align:left;padding-left:2px"><span class="t tl" style="transform:scaleX(0.917)">C:\Designs\WinPCD_v1.610\spl\12m4631 MP.frd</span></div>
<div class="lb" style="left:760px;top:487px;width:496px;height:20px;line-height:18px;background:#000;color:#fff;text-align:left;padding-left:2px"><span class="t tl" style="transform:scaleX(0.917)">C:\Designs\WinPCD_v1.610\imp\12m4631_in_box.zma</span></div>
<div class="lb" style="left:760px;top:530px;width:496px;height:20px;line-height:18px;background:#000;color:#fff;text-align:left;padding-left:2px"><span class="t tl" style="transform:scaleX(0.88)">Midrange2 SPL Filename</span></div>
<div class="lb" style="left:760px;top:551px;width:496px;height:20px;line-height:18px;background:#000;color:#fff;text-align:left;padding-left:2px"><span class="t tl" style="transform:scaleX(0.88)">Midrange2 Impedance Filename</span></div>
<div class="bt" style="left:933px;top:572px;width:176px;height:21px;line-height:19px;background:#c0c0c0;"><span class="t" style="top:1px;">Copy Midrange 1 to&nbsp; Midrange 2</span></div>
<div class="bt" style="left:990px;top:594px;width:63px;height:21px;line-height:19px;background:#c0c0c0;"><span class="t" style="top:1px;">Inactive</span></div>
<div class="bt" style="left:880px;top:616px;width:109px;height:18px;line-height:16px;background:#c0c0c0;border-bottom:none"><span class="t" style="top:1px;">Import Midrange XO</span></div>
<div class="bt" style="left:1055px;top:616px;width:109px;height:18px;line-height:16px;background:#c0c0c0;border-bottom:none"><span class="t" style="top:1px;">Export Midrange XO</span></div>
<div class="a" style="left:368px;top:54px;width:434px;height:333px;background:#fff;border:1px solid #000"></div>
<div class="a" style="left:802px;top:54px;width:16px;height:333px;background:#f0f0f0"></div>
<div class="a" style="left:803px;top:96px;width:14px;height:150px;background:#cdcdcd"></div>
<div class="a" style="left:368px;top:387px;width:450px;height:17px;background:#f0f0f0"></div>
<div class="a" style="left:385px;top:388px;width:371px;height:15px;background:#cdcdcd"></div>
<div class="a" style="left:818px;top:54px;width:434px;height:333px;background:#fff;border:1px solid #000"></div>
<div class="a" style="left:1252px;top:54px;width:16px;height:333px;background:#f0f0f0"></div>
<div class="a" style="left:1253px;top:218px;width:14px;height:151px;background:#cdcdcd"></div>
<div class="a" style="left:818px;top:387px;width:450px;height:17px;background:#f0f0f0"></div>
<div class="a" style="left:835px;top:388px;width:371px;height:15px;background:#cdcdcd"></div>
<svg class="a" style="left:0;top:0" width="1272" height="644" viewBox="0 0 1272 644"><path d="M805.5 66 L809.5 62 L813.5 66" fill="none" stroke="#505050" stroke-width="2.1"/><path d="M1255.5 66 L1259.5 62 L1263.5 66" fill="none" stroke="#505050" stroke-width="2.1"/><path d="M1255.5 376 L1259.5 380 L1263.5 376" fill="none" stroke="#505050" stroke-width="2.1"/><path d="M378 391 L374 395 L378 399" fill="none" stroke="#505050" stroke-width="2.1"/><path d="M807 391 L811 395 L807 399" fill="none" stroke="#505050" stroke-width="2.1"/><path d="M828 391 L824 395 L828 399" fill="none" stroke="#505050" stroke-width="2.1"/><path d="M1258 391 L1262 395 L1258 399" fill="none" stroke="#505050" stroke-width="2.1"/><path d="M456.5 103 V337M473.5 103 V337M484.5 103 V337M493.5 103 V337M501.5 103 V337M507.5 103 V337M513.5 103 V337M517.5 103 V337M550.5 103 V337M566.5 103 V337M578.5 103 V337M587.5 103 V337M595.5 103 V337M601.5 103 V337M606.5 103 V337M611.5 103 V337M644.5 103 V337M660.5 103 V337M672.5 103 V337M681.5 103 V337M688.5 103 V337M695.5 103 V337M700.5 103 V337M705.5 103 V337" stroke="#6a6a6a" stroke-width="1" stroke-dasharray="1 1" fill="none" shape-rendering="crispEdges"/><path d="M423.9 103.5 H742.5366135932813M423.9 122.5 H740.0366135932813M423.9 142.5 H742.5366135932813M423.9 161.5 H740.0366135932813M423.9 181.5 H742.5366135932813M423.9 200.5 H740.0366135932813M423.9 220.5 H742.5366135932813M423.9 239.5 H740.0366135932813M423.9 259.5 H742.5366135932813M423.9 278.5 H740.0366135932813M423.9 298.5 H742.5366135932813M423.9 317.5 H740.0366135932813M423.9 337.5 H742.5366135932813M428.5 103 V341.5M522.5 103 V341.5M615.5 103 V341.5M709.5 103 V341.5M737.5 103 V338" stroke="#000" stroke-width="1" fill="none" shape-rendering="crispEdges"/><path d="M425.9 107.5 H430.9M425.9 111.5 H430.9M425.9 115.5 H430.9M425.9 119.5 H430.9M425.9 126.5 H430.9M425.9 130.5 H430.9M425.9 134.5 H430.9M425.9 138.5 H430.9M425.9 146.5 H430.9M425.9 150.5 H430.9M425.9 154.5 H430.9M425.9 158.5 H430.9M425.9 165.5 H430.9M425.9 169.5 H430.9M425.9 173.5 H430.9M425.9 177.5 H430.9M425.9 185.5 H430.9M425.9 189.5 H430.9M425.9 193.5 H430.9M425.9 197.5 H430.9M425.9 204.5 H430.9M425.9 208.5 H430.9M425.9 212.5 H430.9M425.9 216.5 H430.9M425.9 224.5 H430.9M425.9 228.5 H430.9M425.9 232.5 H430.9M425.9 236.5 H430.9M425.9 243.5 H430.9M425.9 247.5 H430.9M425.9 251.5 H430.9M425.9 255.5 H430.9M425.9 263.5 H430.9M425.9 267.5 H430.9M425.9 271.5 H430.9M425.9 275.5 H430.9M425.9 282.5 H430.9M425.9 286.5 H430.9M425.9 290.5 H430.9M425.9 294.5 H430.9M425.9 302.5 H430.9M425.9 306.5 H430.9M425.9 310.5 H430.9M425.9 314.5 H430.9M425.9 321.5 H430.9M425.9 325.5 H430.9M425.9 329.5 H430.9M425.9 333.5 H430.9M456.5 335 V340M456.5 103 V106M473.5 335 V340M473.5 103 V106M484.5 335 V340M484.5 103 V106M493.5 335 V340M493.5 103 V106M501.5 335 V340M501.5 103 V106M507.5 335 V340M507.5 103 V106M513.5 335 V340M513.5 103 V106M517.5 335 V340M517.5 103 V106M550.5 335 V340M550.5 103 V106M566.5 335 V340M566.5 103 V106M578.5 335 V340M578.5 103 V106M587.5 335 V340M587.5 103 V106M595.5 335 V340M595.5 103 V106M601.5 335 V340M601.5 103 V106M606.5 335 V340M606.5 103 V106M611.5 335 V340M611.5 103 V106M644.5 335 V340M644.5 103 V106M660.5 335 V340M660.5 103 V106M672.5 335 V340M672.5 103 V106M681.5 335 V340M681.5 103 V106M688.5 335 V340M688.5 103 V106M695.5 335 V340M695.5 103 V106M700.5 335 V340M700.5 103 V106M705.5 335 V340M705.5 103 V106" stroke="#000" stroke-width="1" fill="none"/><text x="409.5" y="106.0" font-size="12" text-anchor="middle">110</text><text x="409.5" y="125.5" font-size="12" text-anchor="middle">105</text><text x="409.5" y="145.0" font-size="12" text-anchor="middle">100</text><text x="409.5" y="164.5" font-size="12" text-anchor="middle">95</text><text x="409.5" y="184.0" font-size="12" text-anchor="middle">90</text><text x="409.5" y="203.5" font-size="12" text-anchor="middle">85</text><text x="409.5" y="223.0" font-size="12" text-anchor="middle">80</text><text x="409.5" y="242.5" font-size="12" text-anchor="middle">75</text><text x="409.5" y="262.0" font-size="12" text-anchor="middle">70</text><text x="409.5" y="281.5" font-size="12" text-anchor="middle">65</text><text x="409.5" y="301.0" font-size="12" text-anchor="middle">60</text><text x="409.5" y="320.5" font-size="12" text-anchor="middle">55</text><text x="409.5" y="340.0" font-size="12" text-anchor="middle">50</text><text x="757.5" y="106.0" font-size="12" text-anchor="middle">180</text><text x="757.5" y="145.0" font-size="12" text-anchor="middle">120</text><text x="757.5" y="184.0" font-size="12" text-anchor="middle">60</text><text x="757.5" y="223.0" font-size="12" text-anchor="middle">0</text><text x="757.5" y="262.0" font-size="12" text-anchor="middle">-60</text><text x="757.5" y="301.0" font-size="12" text-anchor="middle">-120</text><text x="757.5" y="340.0" font-size="12" text-anchor="middle">-180</text><text x="427.9" y="354.7" font-size="12" letter-spacing="-0.15" text-anchor="middle">10.0</text><text x="521.7" y="354.7" font-size="12" letter-spacing="-0.15" text-anchor="middle">100.0</text><text x="615.5" y="354.7" font-size="12" letter-spacing="-0.15" text-anchor="middle">1000.0</text><text x="709.3" y="354.7" font-size="12" letter-spacing="-0.15" text-anchor="middle">10000.0</text><text transform="translate(389 220.0) rotate(-90)" font-size="12" letter-spacing="-0.1" text-anchor="middle">SPL (db)</text><text transform="translate(788 220.0) rotate(-90)" font-size="12" letter-spacing="-0.1" text-anchor="middle">Acoustic Phase (Deg)</text><text x="583.7" y="374.5" font-size="12" font-weight="bold" text-anchor="middle" letter-spacing="0">Frequency (Hz)</text><path d="M900.5 103 V337M917.5 103 V337M929.5 103 V337M938.5 103 V337M946.5 103 V337M952.5 103 V337M957.5 103 V337M962.5 103 V337M996.5 103 V337M1012.5 103 V337M1024.5 103 V337M1034.5 103 V337M1041.5 103 V337M1048.5 103 V337M1053.5 103 V337M1058.5 103 V337M1091.5 103 V337M1108.5 103 V337M1120.5 103 V337M1129.5 103 V337M1137.5 103 V337M1143.5 103 V337M1149.5 103 V337M1154.5 103 V337" stroke="#6a6a6a" stroke-width="1" stroke-dasharray="1 1" fill="none" shape-rendering="crispEdges"/><path d="M867.2 103.5 H1191.7784675854766M867.2 142.5 H1191.7784675854766M867.2 181.5 H1191.7784675854766M867.2 220.5 H1191.7784675854766M867.2 259.5 H1191.7784675854766M867.2 298.5 H1191.7784675854766M867.2 337.5 H1191.7784675854766M871.5 103 V341.5M967.5 103 V341.5M1062.5 103 V341.5M1158.5 103 V341.5M1187.5 103 V338" stroke="#000" stroke-width="1" fill="none" shape-rendering="crispEdges"/><path d="M869.2 111.5 H874.2M869.2 119.5 H874.2M869.2 126.5 H874.2M869.2 134.5 H874.2M869.2 150.5 H874.2M869.2 158.5 H874.2M869.2 165.5 H874.2M869.2 173.5 H874.2M869.2 189.5 H874.2M869.2 197.5 H874.2M869.2 204.5 H874.2M869.2 212.5 H874.2M869.2 228.5 H874.2M869.2 236.5 H874.2M869.2 243.5 H874.2M869.2 251.5 H874.2M869.2 267.5 H874.2M869.2 275.5 H874.2M869.2 282.5 H874.2M869.2 290.5 H874.2M869.2 306.5 H874.2M869.2 314.5 H874.2M869.2 321.5 H874.2M869.2 329.5 H874.2M1183.7784675854766 122.5 H1189.7784675854766M1183.7784675854766 161.5 H1189.7784675854766M1183.7784675854766 200.5 H1189.7784675854766M1183.7784675854766 239.5 H1189.7784675854766M1183.7784675854766 278.5 H1189.7784675854766M1183.7784675854766 317.5 H1189.7784675854766M900.5 335 V340M900.5 103 V106M917.5 335 V340M917.5 103 V106M929.5 335 V340M929.5 103 V106M938.5 335 V340M938.5 103 V106M946.5 335 V340M946.5 103 V106M952.5 335 V340M952.5 103 V106M957.5 335 V340M957.5 103 V106M962.5 335 V340M962.5 103 V106M996.5 335 V340M996.5 103 V106M1012.5 335 V340M1012.5 103 V106M1024.5 335 V340M1024.5 103 V106M1034.5 335 V340M1034.5 103 V106M1041.5 335 V340M1041.5 103 V106M1048.5 335 V340M1048.5 103 V106M1053.5 335 V340M1053.5 103 V106M1058.5 335 V340M1058.5 103 V106M1091.5 335 V340M1091.5 103 V106M1108.5 335 V340M1108.5 103 V106M1120.5 335 V340M1120.5 103 V106M1129.5 335 V340M1129.5 103 V106M1137.5 335 V340M1137.5 103 V106M1143.5 335 V340M1143.5 103 V106M1149.5 335 V340M1149.5 103 V106M1154.5 335 V340M1154.5 103 V106" stroke="#000" stroke-width="1" fill="none"/><text x="855.8" y="106.0" font-size="12" text-anchor="middle">30</text><text x="855.8" y="145.0" font-size="12" text-anchor="middle">25</text><text x="855.8" y="184.0" font-size="12" text-anchor="middle">20</text><text x="855.8" y="223.0" font-size="12" text-anchor="middle">15</text><text x="855.8" y="262.0" font-size="12" text-anchor="middle">10</text><text x="855.8" y="301.0" font-size="12" text-anchor="middle">5</text><text x="855.8" y="340.0" font-size="12" text-anchor="middle">0</text><text x="1206.8" y="106.0" font-size="12" text-anchor="middle">180</text><text x="1206.8" y="145.0" font-size="12" text-anchor="middle">120</text><text x="1206.8" y="184.0" font-size="12" text-anchor="middle">60</text><text x="1206.8" y="223.0" font-size="12" text-anchor="middle">0</text><text x="1206.8" y="262.0" font-size="12" text-anchor="middle">-60</text><text x="1206.8" y="301.0" font-size="12" text-anchor="middle">-120</text><text x="1206.8" y="340.0" font-size="12" text-anchor="middle">-180</text><text x="871.2" y="354.7" font-size="12" letter-spacing="-0.15" text-anchor="middle">10.0</text><text x="966.8" y="354.7" font-size="12" letter-spacing="-0.15" text-anchor="middle">100.0</text><text x="1062.4" y="354.7" font-size="12" letter-spacing="-0.15" text-anchor="middle">1000.0</text><text x="1158.0" y="354.7" font-size="12" letter-spacing="-0.15" text-anchor="middle">10000.0</text><text transform="translate(838 220.0) rotate(-90)" font-size="12" letter-spacing="-0.1" text-anchor="middle">Impedance Magnitude (ohms)</text><text transform="translate(1237 220.0) rotate(-90)" font-size="12" letter-spacing="-0.1" text-anchor="middle">Impedance Phase (Deg)</text><text x="1030.0" y="374.5" font-size="12" font-weight="bold" text-anchor="middle" letter-spacing="0">Frequency (Hz)</text><g clip-path="url(#c1)"><path d="M525.9 262.8 C527.3 260.7 531.5 254.4 534.3 250.2 C537.1 246.1 540.0 241.5 542.7 237.7 C545.3 233.8 547.8 230.3 550.4 227.2 C552.9 224.0 555.1 221.7 558.0 218.8 C560.9 215.9 564.3 212.6 567.8 209.7 C571.3 206.8 575.3 203.7 579.0 201.3 C582.7 199.0 586.7 196.9 590.2 195.5 C593.7 194.0 596.7 193.2 600.0 192.5 C603.2 191.9 606.7 191.5 609.7 191.6 C612.8 191.6 615.5 192.2 618.4 192.9 C621.2 193.6 624.0 194.6 626.8 195.7 C629.6 196.9 632.4 198.2 635.2 199.9 C637.9 201.7 640.7 203.9 643.5 206.2 C646.3 208.6 649.1 211.2 651.9 213.9 C654.7 216.6 657.5 219.3 660.3 222.3 C663.1 225.3 666.1 228.9 668.7 232.1 C671.3 235.2 673.4 238.1 675.7 241.2 C678.0 244.2 680.1 246.6 682.7 250.2 C685.2 253.9 689.7 260.7 691.1 262.8" fill="none" stroke="#808080" stroke-width="1.5" stroke-linejoin="round" stroke-linecap="round"/><path d="M486.8 299.7 L495.9 287.1 L502.1 278.1 L509.1 268.3 L516.1 258.5 L518.9 254.3 L522.7 251.5 L525.9 248.7 L532.9 242.4 L542.0 236.1 L550.4 234.7 L559.4 232.6 L563.3 233.8 L566.4 231.2 L577.6 225.9 L586.7 222.2 L593.0 217.3 L600.0 212.0 L604.9 210.6 L609.7 211.1 L615.3 212.7 L623.3 212.7 L628.2 215.2 L633.1 218.7 L637.9 219.4 L643.5 225.7 L650.5 231.9 L654.7 230.5 L660.3 228.5 L663.1 229.1 L667.3 228.2 L671.5 225.0 L674.3 223.1 L678.5 223.1 L682.7 221.5 L687.6 220.5 L690.4 222.9 L693.8 226.8 L695.5 227.8 L698.0 237.5 L700.1 234.0 L702.9 227.1 L707.1 226.6 L709.9 231.9 L712.7 235.4 L716.2 242.4 L719.0 253.6 L720.4 267.6 L721.8 279.5 L722.5 281.6 L723.5 278.5 L724.3 280.2 L725.3 287.1 L726.7 302.5" fill="none" stroke="#f00" stroke-width="1.7" stroke-linejoin="round" stroke-linecap="round"/><path d="M486.8 262.8 L495.9 250.2 L502.1 241.2 L509.1 231.4 L516.1 221.6 L518.9 217.4 L522.7 214.6 L525.9 211.8 L532.9 205.5 L542.0 199.2 L550.4 197.8 L559.4 195.7 L563.3 196.9 L566.4 194.3 L577.6 189.0 L586.7 185.3 L593.0 180.4 L600.0 175.1 L604.9 173.7 L609.7 174.2 L615.3 175.8 L623.3 175.8 L628.2 178.3 L633.1 181.8 L637.9 182.5 L643.5 188.8 L650.5 195.0 L654.7 193.6 L660.3 191.6 L663.1 192.2 L667.3 191.3 L671.5 188.1 L674.3 186.2 L678.5 186.2 L682.7 184.6 L687.6 183.6 L690.4 186.0 L693.8 189.9 L695.5 190.9 L698.0 200.6 L700.1 197.1 L702.9 190.2 L707.1 189.7 L709.9 195.0 L712.7 198.5 L716.2 205.5 L719.0 216.7 L720.4 230.7 L721.8 242.6 L722.5 244.7 L723.5 241.6 L724.3 243.3 L725.3 250.2 L726.7 265.6" fill="none" stroke="#00f" stroke-width="1.7" stroke-linejoin="round" stroke-linecap="round"/></g><defs><clipPath id="c1"><rect x="427" y="103" width="312" height="234"/></clipPath></defs><path d="M872 337.5 H1187" stroke="#f00" stroke-width="1" stroke-opacity="0.75" shape-rendering="crispEdges"/><path d="M900.5 335 V340M917.5 335 V340M929.5 335 V340M938.5 335 V340M946.5 335 V340M952.5 335 V340M957.5 335 V340M962.5 335 V340M996.5 335 V340M1012.5 335 V340M1024.5 335 V340M1034.5 335 V340M1041.5 335 V340M1048.5 335 V340M1053.5 335 V340M1058.5 335 V340M1091.5 335 V340M1108.5 335 V340M1120.5 335 V340M1129.5 335 V340M1137.5 335 V340M1143.5 335 V340M1149.5 335 V340M1154.5 335 V340M967.5 335 V338M1062.5 335 V338M1158.5 335 V338" stroke="#000" stroke-width="1" shape-rendering="crispEdges"/><path d="M871.9 313.5 C874.2 313.4 881.2 312.9 885.9 312.5 C890.6 312.2 895.2 311.8 899.9 311.1 C904.5 310.5 909.2 309.7 913.8 308.5 C918.5 307.3 924.1 305.4 927.8 303.7 C931.6 302.1 933.4 301.2 936.2 298.7 C939.0 296.2 942.3 292.7 944.6 288.9 C946.9 285.2 948.6 281.2 950.2 276.3 C951.8 271.5 953.2 265.6 954.4 259.6 C955.5 253.5 956.7 244.2 957.2 240.0 C957.6 235.8 956.7 239.2 957.2 234.6 C957.6 229.9 959.1 221.0 960.0 212.2 C960.8 203.3 961.5 191.6 962.2 181.4 C962.9 171.3 963.6 159.6 964.2 151.2 C964.7 142.9 965.2 135.3 965.6 131.1 C965.9 126.9 966.2 127.1 966.4 126.1 C966.6 125.1 966.8 125.0 967.0 125.0 C967.2 125.0 967.2 125.1 967.5 126.1 C967.8 127.1 968.2 126.9 968.6 131.1 C969.1 135.3 969.8 142.9 970.3 151.2 C970.9 159.6 971.4 171.3 972.0 181.4 C972.6 191.6 973.2 202.4 974.0 212.2 C974.7 222.0 976.3 235.5 976.7 240.1 C977.2 244.8 976.3 236.8 976.7 240.0 C977.2 243.2 978.4 253.5 979.5 259.6 C980.7 265.6 982.1 271.2 983.7 276.3 C985.4 281.5 987.2 286.4 989.3 290.3 C991.4 294.3 993.5 297.3 996.3 300.1 C999.1 302.9 1002.6 305.3 1006.1 307.1 C1009.6 308.9 1013.6 309.9 1017.3 310.7 C1021.0 311.6 1026.3 312.0 1028.5 312.1 C1030.6 312.3 1027.7 312.0 1030.0 311.8 C1032.3 311.5 1038.8 310.6 1042.4 310.5 C1046.0 310.4 1048.4 311.4 1051.7 311.1 C1055.1 310.9 1058.5 310.1 1062.6 309.3 C1066.7 308.5 1072.2 307.4 1076.6 306.2 C1081.0 304.9 1085.1 302.9 1089.0 301.8 C1092.9 300.8 1096.7 300.8 1099.9 300.0 C1103.0 299.1 1104.3 298.4 1107.6 296.9 C1111.0 295.3 1115.9 293.1 1120.0 290.7 C1124.2 288.2 1128.3 285.4 1132.5 282.3 C1136.6 279.2 1140.6 276.0 1144.9 272.0 C1149.2 268.0 1154.1 263.2 1158.2 258.4 C1162.4 253.5 1166.2 247.9 1169.7 242.8 C1173.2 237.8 1176.1 233.3 1179.0 227.9 C1182.0 222.6 1186.0 213.7 1187.4 210.9" fill="none" stroke="#00f" stroke-width="1.7" stroke-linejoin="round" stroke-linecap="round"/><path d="M431 91.5 H453" stroke="#f00" stroke-width="1.3"/><rect x="458.5" y="86.5" width="47" height="11" fill="#fff" stroke="#000"/><text x="481.0" y="95.3" font-size="9.7" letter-spacing="-0.3" text-anchor="middle" fill="#222">M SPL EQ</text><path d="M511 91.5 H533" stroke="#00f" stroke-width="1.3"/><rect x="538.5" y="86.5" width="37" height="11" fill="#fff" stroke="#000"/><text x="556.0" y="95.3" font-size="9.7" letter-spacing="-0.3" text-anchor="middle" fill="#222">M1 SPL</text><path d="M590 91.5 H612" stroke="#808080" stroke-width="1.3"/><rect x="617.5" y="86.5" width="38" height="11" fill="#fff" stroke="#000"/><text x="635.5" y="95.3" font-size="9.7" letter-spacing="-0.3" text-anchor="middle" fill="#222">Tgt SPL</text><path d="M875 91.5 H896" stroke="#00f" stroke-width="1.3"/><rect x="902.5" y="86.5" width="34" height="11" fill="#fff" stroke="#000"/><text x="918.5" y="95.3" font-size="9.7" letter-spacing="-0.3" text-anchor="middle" fill="#222">M1 Imp</text><path d="M952 91.5 H973" stroke="#f00" stroke-width="1.3"/><rect x="979.5" y="86.5" width="44" height="11" fill="#fff" stroke="#000"/><text x="1000.5" y="95.3" font-size="9.7" letter-spacing="-0.3" text-anchor="middle" fill="#222">M Imp EQ</text><text x="584.5" y="71.5" font-size="12" font-weight="bold" text-anchor="middle" letter-spacing="0">Midrange SPL</text><text x="1034.5" y="71.5" font-size="12" font-weight="bold" text-anchor="middle" letter-spacing="0">Midrange Impedance</text></svg>
<div class="bt" style="left:371px;top:56px;width:53px;height:21px;line-height:19px;background:#c0c0c0;outline:1px solid #87ceeb;font-weight:bold;font-size:14px"><span class="t" style="top:-0.3px;transform:none;letter-spacing:1px">+ / &ndash;</span></div>
<div class="bt" style="left:426px;top:56px;width:64px;height:21px;line-height:19px;background:#00ff7f;outline:1px solid #87ceeb;font-size:14.5px;box-shadow:inset 0 0 0 1px #fff"><span class="t" style="top:-0.3px;">Inverted</span></div>
<div class="bt" style="left:492px;top:56px;width:40px;height:21px;line-height:19px;background:#c0c0c0;outline:1px solid #87ceeb;font-size:10.5px"><span class="t" style="top:-0.3px;transform:scaleX(.95)">Sum</span></div>
<div class="bt" style="left:640px;top:56px;width:63px;height:21px;line-height:19px;background:#c0c0c0;outline:1px solid #87ceeb;font-size:12.3px"><span class="t" style="top:-0.3px;">Raw SPL</span></div>
<div class="bt" style="left:706px;top:56px;width:94px;height:21px;line-height:19px;background:#c0c0c0;outline:1px solid #87ceeb;font-size:12.3px"><span class="t" style="top:-0.3px;">Legend On/Off</span></div>
<div class="bt" style="left:820px;top:56px;width:64px;height:21px;line-height:19px;background:#c0c0c0;outline:1px solid #87ceeb;font-size:12.3px"><span class="t" style="top:-0.3px;">Raw Z</span></div>
<div class="bt" style="left:1156px;top:56px;width:94px;height:21px;line-height:19px;background:#c0c0c0;outline:1px solid #87ceeb;font-size:12.3px"><span class="t" style="top:-0.3px;">Legend On/Off</span></div>
<div class="bt" style="left:371px;top:364px;width:59px;height:21px;line-height:19px;background:#c0c0c0;outline:1px solid #87ceeb;"><span class="t" style="top:-0.3px;">Filter</span></div>
<div class="bt" style="left:822px;top:364px;width:56px;height:21px;line-height:19px;background:#c0c0c0;outline:1px solid #87ceeb;"><span class="t" style="top:-0.3px;left:-8px">Raw Imp</span></div>
<div class="bt" style="left:881px;top:364px;width:59px;height:21px;line-height:19px;background:#c0c0c0;outline:1px solid #87ceeb;"><span class="t" style="top:-0.3px;">BP</span></div>
<div class="bt" style="left:1115px;top:364px;width:68px;height:21px;line-height:19px;background:#c0c0c0;outline:1px solid #87ceeb;font-size:12.3px"><span class="t" style="top:-0.3px;">Raw Phase</span></div>
<div class="bt" style="left:1186px;top:364px;width:64px;height:21px;line-height:19px;background:#c0c0c0;outline:1px solid #87ceeb;font-size:12.3px"><span class="t" style="top:-0.3px;">EQ Phase</span></div>
<div class="a" style="left:418px;top:250px;width:436px;height:143px;background:#f0f0f0;border:1px solid #6d6d6d;box-shadow:0 3px 14px rgba(0,0,0,.45);overflow:visible"></div>
<div class="a" style="left:419px;top:251px;width:434px;height:30px;background:#fff"></div>
<div class="a" style="left:427px;top:256px;height:20px;line-height:20px;font-size:12px;letter-spacing:-0.03px">Driver Nominal Impedance for Text Book Calculations</div>
<svg class="a" style="left:730px;top:257px" width="110" height="16" viewBox="0 0 110 16"><path d="M4 8.5 H14 M49.5 3.5 H59.5 V13.5 H49.5Z M95 3 L105 13 M105 3 L95 13" fill="none" stroke="#000" stroke-width="1"/></svg>
<div class="a" style="left:472px;top:301.0px;height:15px;line-height:15px"><span class="t tl">Enter Driver Nominal Impedance, typically 4 or 8 ohms.</span></div>
<div class="a" style="left:472px;top:314.4px;height:15px;line-height:15px"><span class="t tl">Calculations are made based on electrical (not acoustic) order selected.</span></div>
<div class="a" style="left:472px;top:327.8px;height:15px;line-height:15px"><span class="t tl">Linkwitz-Riley and Bessel are only valid for even-order circuits.</span></div>
<div class="a" style="left:549px;top:351px;width:50px;height:20px;background:#fff;border:1px solid #0078d7;text-align:right;padding-right:3px;line-height:18px"><span class="t tr">4</span></div>
<div class="a" style="left:596px;top:354px;width:1px;height:14px;background:#000"></div>
<div class="a" style="left:670px;top:362px;width:78px;height:21px;background:#e1e1e1;border:2px solid #0078d7;text-align:center;line-height:17px"><span class="t" style="top:0.5px;left:-1.5px">Accept</span></div>
<div class="a" style="left:760px;top:362px;width:78px;height:21px;background:#e1e1e1;border:1px solid #adadad;text-align:center;line-height:19px"><span class="t" style="top:0.5px;left:-1.2px">Cancel</span></div>
<svg class="a" style="left:172px;top:299px" width="14" height="22" viewBox="0 0 14 22"><path d="M1 1 L1 17 L4.8 13.5 L7.5 20 L10 19 L7.3 12.6 L12.3 12.3Z" fill="#fff" stroke="#000" stroke-width="1"/></svg>
</body></html>
